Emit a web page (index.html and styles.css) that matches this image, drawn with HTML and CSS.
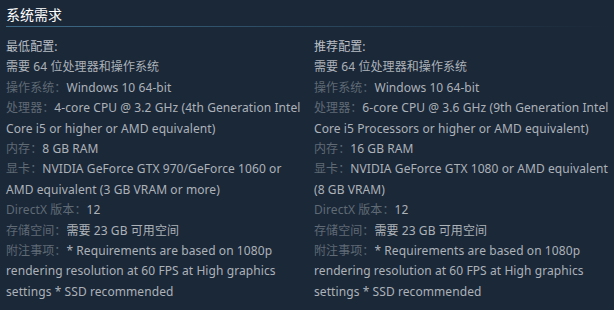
FILE: index.html
```html
<!DOCTYPE html>
<html lang="zh-CN">
<head>
<meta charset="utf-8">
<title>系统需求</title>
<link rel="stylesheet" href="styles.css">
</head>
<body>
<section class="sysreq">
  <h2 class="title">系统需求</h2>
  <div class="cols">
    <div class="col">
      <div class="head">最低配置:</div>
      <ul class="list">
        <li>需要 64 位处理器和操作系统</li>
        <li><span class="lbl">操作系统：</span>Windows 10 64-bit</li>
        <li><span class="lbl">处理器：</span>4-core CPU @ 3.2 GHz (4th Generation Intel Core i5 or higher or AMD equivalent)</li>
        <li><span class="lbl">内存：</span>8 GB RAM</li>
        <li><span class="lbl">显卡：</span>NVIDIA GeForce GTX 970/GeForce 1060 or AMD equivalent (3 GB VRAM or more)</li>
        <li><span class="lbl">DirectX 版本：</span>12</li>
        <li><span class="lbl">存储空间：</span>需要 23 GB 可用空间</li>
        <li><span class="lbl">附注事项：</span>* Requirements are based on 1080p rendering resolution at 60 FPS at High graphics settings * SSD recommended</li>
      </ul>
    </div>
    <div class="col">
      <div class="head">推荐配置:</div>
      <ul class="list">
        <li>需要 64 位处理器和操作系统</li>
        <li><span class="lbl">操作系统：</span>Windows 10 64-bit</li>
        <li><span class="lbl">处理器：</span>6-core CPU @ 3.6 GHz (9th Generation Intel Core i5 Processors or higher or AMD equivalent)</li>
        <li><span class="lbl">内存：</span>16 GB RAM</li>
        <li><span class="lbl">显卡：</span>NVIDIA GeForce GTX 1080 or AMD equivalent (8 GB VRAM)</li>
        <li><span class="lbl">DirectX 版本：</span>12</li>
        <li><span class="lbl">存储空间：</span>需要 23 GB 可用空间</li>
        <li><span class="lbl">附注事项：</span>* Requirements are based on 1080p rendering resolution at 60 FPS at High graphics settings * SSD recommended</li>
      </ul>
    </div>
  </div>
</section>
</body>
</html>
```
FILE: styles.css
```css
html, body {
  margin: 0;
  padding: 0;
  background: #1b2838;
}

body {
  font-family: "Noto Sans", "Noto Sans CJK SC", sans-serif;
  color: #acb2b8;
}

.sysreq {
  padding: 0 6px;
}

.title {
  margin: 0;
  padding: 5px 0 2px;
  font-size: 14px;
  line-height: 20px;
  font-weight: normal;
  color: #ffffff;
  background-image: linear-gradient(to right, #3f6c89 0%, rgba(59, 110, 140, 0.45) 50%, rgba(59, 110, 140, 0) 100%);
  background-repeat: no-repeat;
  background-size: 100% 1px;
  background-position: left bottom;
}

.cols {
  display: grid;
  grid-template-columns: 296px 296px;
  column-gap: 12px;
  margin-top: 10px;
  font-size: 12px;
  line-height: 20.4px;
  letter-spacing: 0.08px;
}

.head {
  color: #b8bec4;
}

.list {
  list-style: none;
  margin: 0;
  padding: 0;
}

.lbl {
  color: #5f6a75;
}
```
